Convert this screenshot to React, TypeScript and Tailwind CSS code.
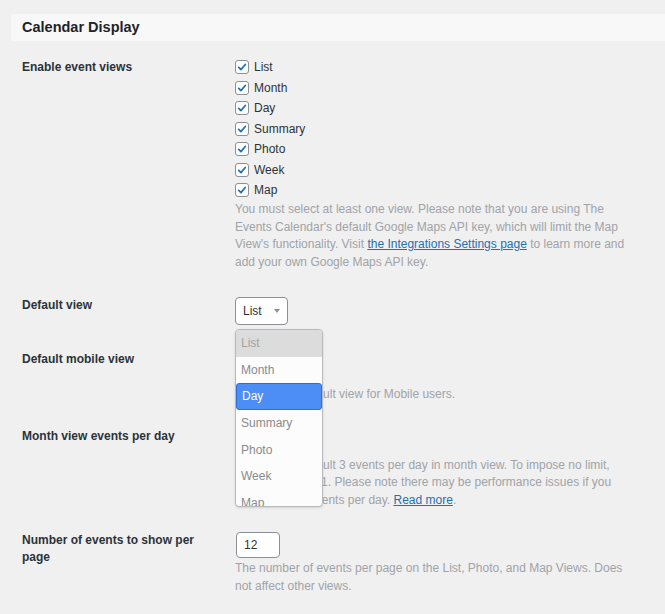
import type React from 'react';

const views = ['List', 'Month', 'Day', 'Summary', 'Photo', 'Week', 'Map'];

const CheckIcon = () => (
  <svg viewBox="0 0 14 14" className="h-[14px] w-[14px]" fill="none">
    <path d="M3.2 7.4l2.6 2.7 5-6" stroke="#2271b1" strokeWidth={2} strokeLinecap="round" strokeLinejoin="round" />
  </svg>
);

const Row: React.FC<{ label: string; className?: string; children: React.ReactNode }> = ({
  label,
  className,
  children,
}) => (
  <div className={`flex ${className ?? ''}`}>
    <div className="w-[213px] shrink-0 pr-[23px] text-[12px] font-bold leading-[17px] text-[#2c3338]">{label}</div>
    <div className="relative flex-1 pr-[20px]">{children}</div>
  </div>
);

const Desc: React.FC<{ children: React.ReactNode; className?: string }> = ({ children, className }) => (
  <p className={`text-[12px] leading-[17.5px] text-[#a0a3a7] ${className ?? ''}`}>{children}</p>
);

export default function App() {
  return (
    <div
      className="min-h-screen bg-[#f0f0f1] pl-[11px] pt-[14px]"
      style={{ fontFamily: '"Liberation Sans", Arial, sans-serif' }}>
      {/* Section header */}
      <div className="flex h-[27px] items-center bg-[#f8f8f8] pl-[11px] pt-[1px]">
        <h2 className="text-[14.5px] font-bold text-[#1d2327]">Calendar Display</h2>
      </div>

      <div className="pl-[11px]">
        {/* Enable event views */}
        <div className="mt-[16px] flex">
          <div className="w-[213px] shrink-0 text-[12px] font-bold leading-[20px] text-[#2c3338]">
            Enable event views
          </div>
          <div className="flex-1">
            {views.map(v => (
              <div key={v} className="flex h-[20.5px] items-center gap-[5px]">
                <span className="flex h-[14px] w-[14px] items-center justify-center rounded-[3px] border border-[#8c8f94] bg-white">
                  <CheckIcon />
                </span>
                <span className="text-[12px] text-[#2c3338]">{v}</span>
              </div>
            ))}
            <Desc className="mt-[0.5px]">
              You must select at least one view. Please note that you are using The
              <br />
              Events Calendar's default Google Maps API key, which will limit the Map
              <br />
              View's functionality. Visit{' '}
              <a className="text-[#2271b1] underline">the Integrations Settings page</a> to learn more and
              <br />
              add your own Google Maps API key.
            </Desc>
          </div>
        </div>

        {/* Default view */}
        <Row label="Default view" className="mt-[26px]">
          <div className="flex h-[28px] w-[53px] items-center justify-between rounded-[4px] border border-[#8c8f94] bg-white pl-[7px] pr-[7px]">
            <span className="text-[12px] text-[#2c3338]">List</span>
            <svg viewBox="0 0 6 4" className="h-[4px] w-[6px]">
              <path d="M0 0h6L3 4z" fill="#8c8f94" />
            </svg>
          </div>

          {/* Open select menu */}
          <div className="absolute left-0 top-[32px] z-10 h-[178px] w-[88px] overflow-hidden rounded-[4px] border border-[#b8b9bc] bg-[#fcfcfc] shadow-sm">
            {views.map(v =>
              v === 'Day' ? (
                <div
                  key={v}
                  className="flex h-[26.6px] items-center rounded-[3px] border border-[#2a6fdc] bg-[#4c8df6] pl-[5px] text-[12px] text-white">
                  {v}
                </div>
              ) : (
                <div
                  key={v}
                  className={`flex h-[26.6px] items-center pl-[5px] text-[12px] ${v === 'List' ? 'bg-[#dcdcdc] text-[#a3a3a3]' : 'text-[#8a8a8a]'}`}>
                  {v}
                </div>
              ),
            )}
          </div>
        </Row>

        {/* Default mobile view */}
        <Row label="Default mobile view" className="mt-[26px]">
          <div className="flex h-[28px] w-[60px] items-center rounded-[4px] border border-[#8c8f94] bg-white pl-[7px] text-[12px] text-[#2c3338]">
            Day
          </div>
          <Desc className="mt-[7px]">Choose the default view for Mobile users.</Desc>
        </Row>

        {/* Month view events per day */}
        <Row label="Month view events per day" className="mt-[24px]">
          <div className="flex h-[26px] w-[44px] items-center rounded-[4px] border border-[#8c8f94] bg-white pl-[8px] text-[12px] text-[#2c3338]">
            3
          </div>
          <Desc className="mt-[3px]">
            Choose the default 3 events per day in month view. To impose no limit,
            <br />
            you may enter –1. Please note there may be performance issues if you
            <br />
            allow over 10 events per day. <a className="text-[#2271b1] underline">Read more</a>.
          </Desc>
        </Row>

        {/* Number of events per page */}
        <Row label="Number of events to show per page" className="mt-[23px]">
          <div className="ml-[1px] flex h-[26px] w-[44px] items-center rounded-[4px] border border-[#8c8f94] bg-white pl-[7px] text-[12px] text-[#2c3338]">
            12
          </div>
          <Desc className="mt-[2px]">
            The number of events per page on the List, Photo, and Map Views. Does
            <br />
            not affect other views.
          </Desc>
        </Row>
      </div>
    </div>
  );
}
